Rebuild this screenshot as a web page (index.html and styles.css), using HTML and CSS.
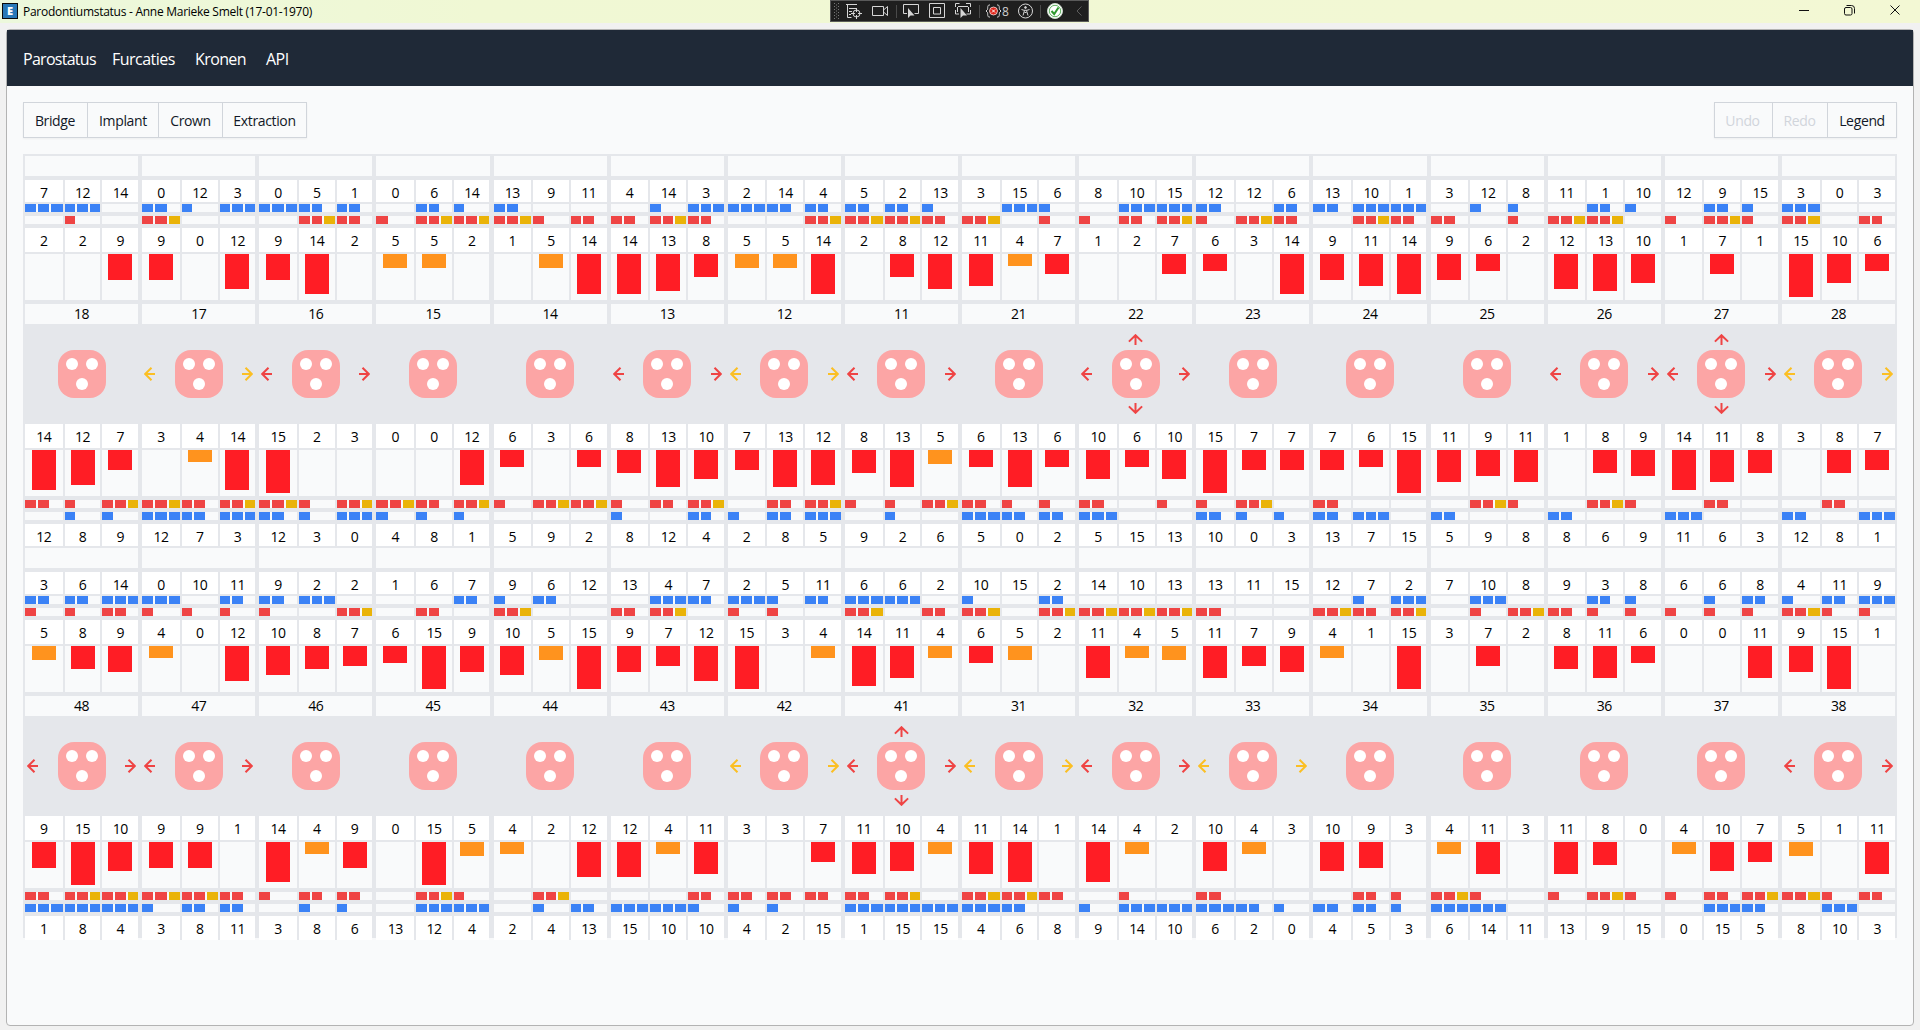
FILE: index.html
```html
<!DOCTYPE html>
<html lang="nl">
<head>
<meta charset="utf-8">
<title>Parodontiumstatus</title>
<link rel="stylesheet" href="styles.css">
</head>
<body>
<header class="titlebar">
  <span class="app-icon">E</span>
  <span class="window-title">Parodontiumstatus - Anne Marieke Smelt (17-01-1970)</span>
  <svg class="window-controls" width="110" height="20" viewBox="0 0 110 20" fill="none" stroke="#111">
    <path d="M4 10.500h10"/>
    <path d="M51.500 5.500h5a3 3 0 0 1 3 3v5" />
    <rect x="49.500" y="7.500" width="7.500" height="7.500" rx="1.500"/>
    <path d="M95.500 5.500l9 9M104.500 5.500l-9 9"/>
  </svg>
  <div class="debug-bar">
    <svg width="257" height="20" viewBox="831 1 257 20" fill="none" stroke="#d6d6d6">
      <path d="M834.500 3v16M838.500 3v16" stroke="#777" stroke-dasharray="1 2"/><path d="M836.500 4.500v14" stroke="#777" stroke-dasharray="1 2"/>
      <path d="M846 4.500h11M847.500 4v13.500h4M849 8.500h7M849 11.500h3M849 14.500h2" />
      <circle cx="856.500" cy="13.500" r="3.500"/><path d="M856.500 8v4M856.500 15v4M851 13.500h4M858 13.500h4"/>
      <path d="M872.500 6.500h11v9h-11zM883.500 10l4-3.500v9l-4-3.500"/>
      <path d="M896.500 5v13M979.500 5v13M1040.500 5v13" stroke="#4a4a4a"/>
      <path d="M907 13.500h-3.500v-9h15v9h-4"/><path d="M908 8v10l2.500-2.500h4z" fill="#d6d6d6" stroke="none"/>
      <path d="M929.500 3.500h15v14h-15zM933.500 7.500h7v6.500h-7z"/>
      <path d="M955.500 7v-3.500h4M966 3.500h4.500v3.500M955.500 10v4h3.500M970.500 10v4h-4M958 6.500h10M957.500 7v5M968.500 7v5"/>
      <path d="M960.500 8v10l2.500-2.500h4z" fill="#d6d6d6" stroke="none"/>
      <path d="M990 5c-3-.5-2 3-2.500 4.500L986 11l1.500 1.500c.5 2-.5 5 2.500 4.500M997 5c3-.5 2 3 2.500 4.500L1001 11l-1.500 1.500c-.5 2 .5 5-2.500 4.500"/>
      <circle cx="993.500" cy="11" r="4" fill="#e0261b" stroke="#fff" stroke-width=".7"/><path d="M992 9.500l3 3M995 9.500l-3 3" stroke="#fff"/>
      <circle cx="1025.500" cy="11" r="7"/><circle cx="1025.500" cy="7.500" r=".9" fill="#d6d6d6"/><path d="M1021.500 9.500l2.500.8h3l2.500-.8M1024.500 10.500l-1.500 5M1026.500 10.500l1.500 5M1024.500 12.500h2"/>
      <circle cx="1055" cy="11" r="7.500" fill="#fff" stroke="#c9d9c9"/><circle cx="1055" cy="11" r="5.700" stroke="#3a9f3a" stroke-width=".8"/><path d="M1051.500 11l2.700 3 4.300-6.500" stroke="#2e9a2e" stroke-width="2"/>
      <path d="M1081.500 6.500l-4.500 4.500 4.500 4.500" stroke="#5c5c5c"/>
    </svg>
    <span class="debug-count">8</span>
  </div>
</header>
<main class="page">
  <nav class="nav">
    <a class="nav-link nav-paro">Parostatus</a>
    <a class="nav-link nav-furc">Furcaties</a>
    <a class="nav-link nav-kron">Kronen</a>
    <a class="nav-link">API</a>
  </nav>
  <div class="toolbar">
    <div class="button-group">
      <button class="btn btn-bridge">Bridge</button>
      <button class="btn btn-implant">Implant</button>
      <button class="btn btn-crown">Crown</button>
      <button class="btn btn-extraction">Extraction</button>
    </div>
    <div class="button-group">
      <button class="btn btn-undo" disabled>Undo</button>
      <button class="btn btn-redo" disabled>Redo</button>
      <button class="btn btn-legend">Legend</button>
    </div>
  </div>
  <section class="chart" id="chart"></section>
</main>
<script src="chart.js"></script>
</body>
</html>
```
FILE: styles.css
```css
* { box-sizing: border-box; }
body {
  margin: 0;
  height: 1030px;
  overflow: hidden;
  background: #f1f1f1;
  color: #000;
  font-family: "Open Sans", "Noto Sans", sans-serif;
  font-size: 14px;
}
.titlebar {
  position: relative;
  display: flex;
  align-items: center;
  height: 23px;
  padding: 0 15px 0 2px;
  background: linear-gradient(90deg, #ecf8dc, #f0f8d4 25%, #f3f8d4);
}
.app-icon {
  width: 16px;
  height: 16px;
  margin-top: -1px;
  border: 1px solid #0b0b0b;
  background: #2878b8;
  color: #fff;
  font-size: 11px;
  font-weight: 800;
  line-height: 14px;
  text-align: center;
}
.window-title {
  margin-left: 5px;
  font-size: 12px;
  line-height: 23px;
  letter-spacing: -0.27px;
}
.window-controls { margin-left: auto; margin-bottom: 3px; }
.debug-bar {
  position: absolute;
  left: 830px;
  top: 0;
  width: 259px;
  height: 22px;
  border: 1px solid #5a5a5a;
  background: #1f1f1f;
}
.debug-bar svg { display: block; }
.debug-count {
  position: absolute;
  left: 171px;
  top: 1px;
  color: #d0d0d0;
  font-size: 12px;
  line-height: 20px;
}
.page {
  width: 1908px;
  height: 997px;
  margin: 6px 0 0 6px;
  border: 1px solid #b3b3b3;
  border-radius: 4px;
  background: #f9fafb;
}
.nav {
  display: flex;
  align-items: center;
  height: 56px;
  padding: 1px 16px 0;
  background: #1f2937;
  color: #fff;
  font-size: 16px;
}
.nav-link { letter-spacing: -0.52px; white-space: nowrap; }
.nav-paro { width: 89px; letter-spacing: -0.72px; }
.nav-furc { width: 83px; }
.nav-kron { width: 71px; letter-spacing: -0.6px; }
.toolbar {
  display: flex;
  justify-content: space-between;
  padding: 16px 16px 16px;
}
.button-group { display: flex; box-shadow: 0 1px 2px rgba(0, 0, 0, .05); }
.btn {
  height: 36px;
  margin: 0;
  padding: 1px 0 0;
  border: 1px solid #d1d5db;
  border-left-width: 0;
  background: transparent;
  color: #111827;
  font: 14px/33px "Open Sans", sans-serif;
  letter-spacing: -0.35px;
}
.btn:first-child { border-left-width: 1px; }
.btn:disabled { color: #d1d5db; }
.btn-bridge { width: 65px; padding-right: 1px; }
.btn-implant { width: 71px; }
.btn-crown { width: 64px; }
.btn-extraction { width: 84px; }
.btn-undo { width: 59px; padding-right: 2px; }
.btn-redo { width: 55px; padding-right: 1px; }
.btn-legend { width: 69px; }

.chart {
  margin: 0 16px;
  padding-top: 2px;
  background: #e5e7eb;
}
.jaw { display: flex; }
.jaw + .jaw { margin-top: 2px; }
.tooth {
  display: flex;
  flex: 1 1 0;
  flex-direction: column;
  min-width: 0;
  padding: 0 2px;
}
.blank { height: 20px; margin-bottom: 4px; background: #f9fafb; }
.row { display: flex; }
.cell { flex: 0 0 33.3333%; min-width: 0; }
.cell + .cell { border-left: 2px solid #e5e7eb; }
.numbers { height: 24px; }
.numbers .cell {
  height: 24px;
  background: #fff;
  line-height: 26px;
  text-align: center;
  letter-spacing: -0.5px;
}
.numbers-edge { height: 22px; }
.jaw:first-child .numbers-edge .cell,
.numbers-edge:nth-child(2) .cell { height: 22px; }
.numbers-edge:nth-child(2) { margin-bottom: 2px; }
.marks { height: 8px; margin-bottom: 4px; }
.marks .cell {
  display: grid;
  grid-template-columns: repeat(3, 1fr);
  column-gap: 2px;
  background-color: #f9fafb;
}
.plaque { background: #3b82f6; }
.bleed { background: #ef4444; }
.pus { background: #eab308; }
.pockets { height: 46px; margin: 2px 0 4px; }
.pockets .cell { display: flex; justify-content: center; background: #f9fafb; }
.bar { width: 24px; background: #ff1d25; }
.bar-mild { background: #ff931e; }
.label {
  height: 20px;
  background: #f9fafb;
  line-height: 20px;
  text-align: center;
  letter-spacing: -0.5px;
}
.furcation {
  display: grid;
  grid-template: 1fr 48px 1fr / 1fr 48px 1fr;
  height: 100px;
  color: #ef4444;
}
.furcation-mild { color: #fbbf24; }
.molar { grid-area: 2 / 2; }
.arrow { fill: none; stroke: currentColor; stroke-width: 2; }
.arrow-left { grid-area: 2 / 1; place-self: center start; margin-left: 2px; }
.arrow-right { grid-area: 2 / 3; place-self: center end; margin-right: 2px; }
.arrow-up { grid-area: 1 / 2; place-self: end center; margin-bottom: 5px; }
.arrow-down { grid-area: 3 / 2; place-self: start center; margin-top: 5px; }
```
FILE: chart.js
```js
const jaws = [
  {
    teeth: "18 17 16 15 14 13 12 11 21 22 23 24 25 26 27 28",
    recession: "7 12 14|0 12 3|0 5 1|0 6 14|13 9 11|4 14 3|2 14 4|5 2 13|3 15 6|8 10 15|12 12 6|13 10 1|3 12 8|11 1 10|12 9 15|3 0 3",
    plaque: "330 213 322 021 200 013 322 221 031 033 202 233 011 021 021 300",
    bleeding: "010 300 032 133 312 232 003 332 301 123 132 032 201 330 131 302",
    depth: "2 2 9|9 0 12|9 14 2|5 5 2|1 5 14|14 13 8|5 5 14|2 8 12|11 4 7|1 2 7|6 3 14|9 11 14|9 6 2|12 13 10|1 7 1|15 10 6",
    furcation: "-yr--ryr-R---rRy",
    innerDepth: "14 12 7|3 4 14|15 2 3|0 0 12|6 3 6|8 13 10|7 13 12|8 13 5|6 13 6|10 6 10|15 7 7|7 6 15|11 9 11|1 8 9|14 11 8|3 8 7",
    innerBleeding: "213 323 313 323 133 123 023 113 211 201 130 200 031 031 020 020",
    innerPlaque: "011 323 213 111 000 102 123 010 322 300 211 230 200 200 300 203",
    innerRecession: "12 8 9|12 7 3|12 3 0|4 8 1|5 9 2|8 12 4|2 8 5|9 2 6|5 0 2|5 15 13|10 0 3|13 7 15|5 9 8|8 6 9|11 6 3|12 8 1"
  },
  {
    teeth: "48 47 46 45 44 43 42 41 31 32 33 34 35 36 37 38",
    recession: "3 6 14|0 10 11|9 2 2|1 6 7|9 6 12|13 4 7|2 5 11|6 6 2|10 15 2|14 10 13|13 11 15|12 7 2|7 10 8|9 3 8|6 6 8|4 11 9",
    plaque: "223 302 230 002 120 032 312 330 102 000 000 013 030 021 012 123",
    bleeding: "112 111 103 020 300 230 110 302 303 333 200 323 013 211 111 311",
    depth: "5 8 9|4 0 12|10 8 7|6 15 9|10 5 15|9 7 12|15 3 4|14 11 4|6 5 2|11 4 5|11 7 9|4 1 15|3 7 2|8 11 6|0 0 11|9 15 1",
    furcation: "rr----yRyry----r",
    innerDepth: "9 15 10|9 9 1|14 4 9|0 15 5|4 2 12|12 4 11|3 3 7|11 10 4|11 14 1|14 4 2|10 4 3|10 9 3|4 11 3|11 8 0|4 10 7|5 1 11",
    innerBleeding: "233 332 122 031 030 002 222 230 332 010 200 021 310 131 123 312",
    innerPlaque: "333 122 011 033 012 331 110 333 320 133 321 221 330 000 032 030",
    innerRecession: "1 8 4|3 8 11|3 8 6|13 12 4|2 4 13|15 10 10|4 2 15|1 15 15|4 6 8|9 14 10|6 2 0|4 5 3|6 14 11|13 9 15|0 15 5|8 10 3"
  }
];

const row = (cls, cells) =>
  `<div class="row ${cls}">${cells.map(c => `<div class="cell">${c}</div>`).join("")}</div>`;

const values = (data, i) => data.split("|")[i].split(" ");

const numbers = (data, i, edge = "") => row("numbers " + edge, values(data, i));

const marks = (data, i, kinds) =>
  row("marks", [...data.split(" ")[i]].map(n =>
    kinds.slice(0, +n).map(k => `<i class="${k}"></i>`).join("")));

const pockets = (data, i) =>
  row("pockets", values(data, i).map(v =>
    v < 4 ? "" : `<div class="bar ${v < 6 ? "bar-mild" : ""}" style="height:${v / 16 * 100}%"></div>`));

const arrows = {
  left: [11, 14, "M7.500 .7L1.200 7l6.300 6.300M1.200 7H11"],
  right: [11, 14, "M3.500 .7L9.800 7l-6.300 6.300M9.800 7H0"],
  up: [15, 11, "M.9 7.600L7.500 1.200l6.600 6.400M7.500 1.200V11"],
  down: [15, 11, "M.9 3.400L7.500 9.800l6.600-6.400M7.500 9.800V0"]
};

const arrow = dir => {
  const [w, h, d] = arrows[dir];
  return `<svg class="arrow arrow-${dir}" width="${w}" height="${h}" viewBox="0 0 ${w} ${h}"><path d="${d}"/></svg>`;
};

const furcation = code => {
  const dirs = { "-": [], y: ["left", "right"], r: ["left", "right"], R: ["left", "right", "up", "down"] }[code];
  return `<div class="furcation ${code === "y" ? "furcation-mild" : ""}">
    <svg class="molar" width="48" height="48" viewBox="0 0 48 48"><rect width="48" height="48" rx="16" fill="#fca5a5"/><g fill="#fff"><circle cx="14" cy="14" r="6"/><circle cx="34" cy="14" r="6"/><circle cx="24" cy="34" r="6"/></g></svg>
    ${dirs.map(arrow).join("")}</div>`;
};

const plaque = ["plaque", "plaque", "plaque"];
const bleeding = ["bleed", "bleed", "pus"];

document.getElementById("chart").innerHTML = jaws.map(j =>
  `<div class="jaw">${j.teeth.split(" ").map((name, i) => `<div class="tooth">
    <div class="blank"></div>
    ${numbers(j.recession, i, "numbers-edge")}
    ${marks(j.plaque, i, plaque)}
    ${marks(j.bleeding, i, bleeding)}
    ${numbers(j.depth, i)}
    ${pockets(j.depth, i)}
    <div class="label">${name}</div>
    ${furcation(j.furcation[i])}
    ${numbers(j.innerDepth, i)}
    ${pockets(j.innerDepth, i)}
    ${marks(j.innerBleeding, i, bleeding)}
    ${marks(j.innerPlaque, i, plaque)}
    ${numbers(j.innerRecession, i, "numbers-edge")}
  </div>`).join("")}</div>`).join("");
```
